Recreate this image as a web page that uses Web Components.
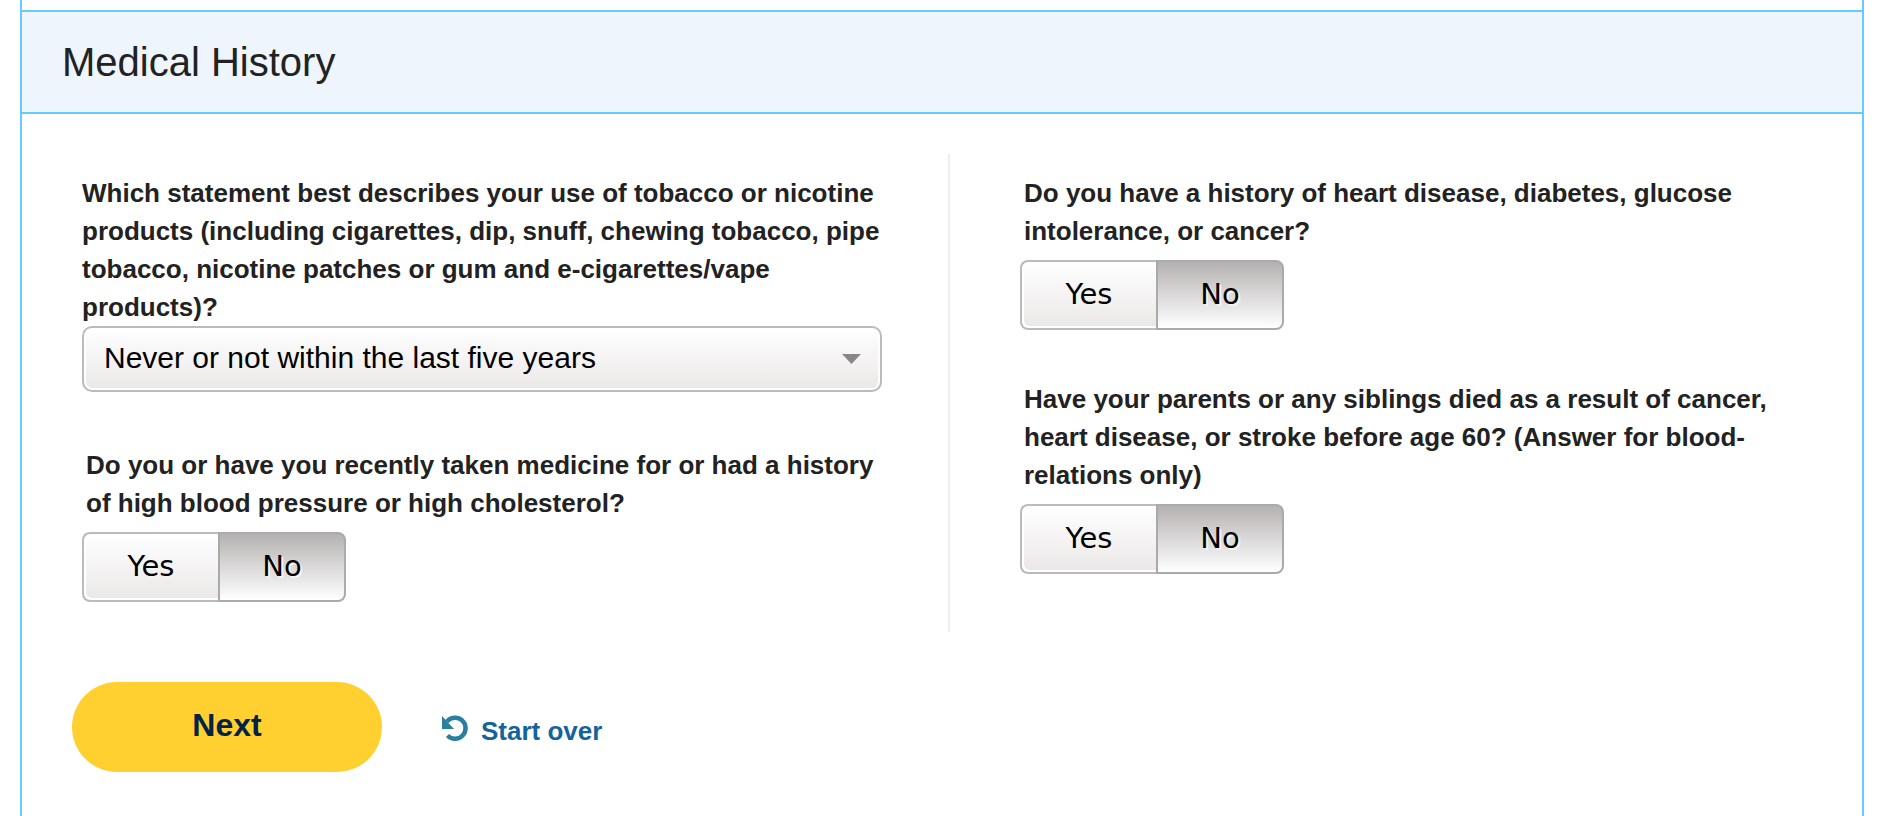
<!DOCTYPE html>
<html lang="en">
<head>
<meta charset="utf-8">
<title>Medical History</title>
<style>
  body { margin: 0; background: #fff; color: #222; font-family: "Liberation Sans", Arial, sans-serif; font-size: 26px; line-height: 38px; }
</style>
</head>
<body>
<form-panel>
  <span slot="title">Medical History</span>
  <select-question slot="left" label="Which statement best describes your use of tobacco or nicotine products (including cigarettes, dip, snuff, chewing tobacco, pipe tobacco, nicotine patches or gum and e-cigarettes/vape products)?">
  </select-question>
  <yes-no-question slot="left" name="pressure">Do you or have you recently taken medicine for or had a history of high blood pressure or high cholesterol?</yes-no-question>
  <yes-no-question slot="right" name="history">Do you have a history of heart disease, diabetes, glucose intolerance, or cancer?</yes-no-question>
  <yes-no-question slot="right" name="family">Have your parents or any siblings died as a result of cancer, heart disease, or stroke before age 60? (Answer for blood-relations only)</yes-no-question>
  <form-actions slot="actions"></form-actions>
</form-panel>

<script>
function define(name, html) {
  const template = document.createElement("template");
  template.innerHTML = html;
  customElements.define(name, class extends HTMLElement {
    constructor() {
      super();
      this.attachShadow({ mode: "open" }).append(template.content.cloneNode(true));
    }
    connectedCallback() {
      const label = this.shadowRoot.querySelector("[data-label]");
      if (label) label.textContent = this.getAttribute("label");
      for (const radio of this.shadowRoot.querySelectorAll("input[type=radio]")) radio.name = this.getAttribute("name");
    }
  });
}

define("form-panel", `
  <style>
    :host { display: block; box-sizing: border-box; min-height: 100vh; margin: 0 16px 0 20px; padding-top: 10px; border: solid #6cf; border-width: 0 2px; }
    header { padding: 26px 40px; background: #eef5fd; border: solid #6cf; border-width: 2px 0; }
    h1 { margin: 0; font-size: 40px; line-height: 48px; font-weight: 400; }
    main { display: grid; grid-template-columns: 928px 1fr; padding-top: 40px; }
    section { display: flex; flex-direction: column; gap: 50px; padding: 20px 60px 30px; }
    .left { border-right: 2px solid #eee; padding-right: 66px; }
    .right { padding-left: 70px; padding-right: 80px; }
    @media (max-width: 1400px) { main { grid-template-columns: 1fr 1fr; } }
    @media (max-width: 900px) { main { grid-template-columns: 1fr; } .left { border-right: 0; } }
  </style>
  <header><h1><slot name="title"></slot></h1></header>
  <main>
    <section class="left"><slot name="left"></slot></section>
    <section class="right"><slot name="right"></slot></section>
  </main>
  <slot name="actions"></slot>
`);

define("select-question", `
  <style>
    :host { display: block; padding-bottom: 4px; }
    label { display: block; font-weight: 700; }
    .box { position: relative; }
    select { appearance: none; display: block; box-sizing: border-box; width: 100%; height: 66px; margin: 0; padding: 0 60px 2px 20px; border: 2px solid #bbb; border-radius: 10px; background: linear-gradient(#fff, #ebe7e7); box-shadow: inset 0 0 0 2px #fff; color: #000; font: 30px/36px "Liberation Sans", Arial, sans-serif; }
    svg { position: absolute; right: 21px; top: 28px; pointer-events: none; }
  </style>
  <label for="answer" data-label></label>
  <div class="box">
    <select id="answer"><option>Never or not within the last five years</option></select>
    <svg width="19" height="10" viewBox="0 0 19 10" aria-hidden="true"><path d="M0 0H19L9.500 10Z" fill="#888"/></svg>
  </div>
`);

define("yes-no-question", `
  <style>
    :host { display: block; }
    fieldset { margin: 0; padding: 0; border: 0; min-width: 0; }
    legend { padding: 0 0 10px 4px; font-weight: 700; }
    .group { display: inline-flex; vertical-align: top; }
    label { position: relative; display: flex; box-sizing: border-box; justify-content: center; height: 70px; padding-top: 14px; border: 2px solid #bbb; background: linear-gradient(#fff, #ebe7e7); box-shadow: inset 2px -2px #fff; color: #000; font: 29px/36px "DejaVu Sans", Verdana, sans-serif; text-shadow: 2px 2px #f3f3f3; }
    .yes { width: 136px; border-right: 0; border-radius: 8px 0 0 8px; }
    .no { width: 128px; border-radius: 0 8px 8px 0; }
    input { position: absolute; inset: 0; width: 100%; height: 100%; margin: 0; opacity: 0; }
    label:has(input:checked) { border-color: #aaa; background: linear-gradient(#b5b1b1, #fff); box-shadow: none; }
    label:has(input:focus-visible) { outline: 2px solid #15639b; }
  </style>
  <fieldset>
    <legend><slot></slot></legend>
    <div class="group">
      <label class="yes"><input type="radio" value="yes">Yes</label>
      <label class="no"><input type="radio" value="no" checked>No</label>
    </div>
  </fieldset>
`);

define("form-actions", `
  <style>
    :host { display: flex; align-items: center; gap: 59px; padding: 50px 50px 44px; }
    button { width: 310px; height: 90px; padding: 0 0 4px; border: 0; border-radius: 45px; background: #ffd02f; color: #002347; font: 700 32px/40px "Liberation Sans", Arial, sans-serif; }
    a { display: flex; align-items: center; gap: 12px; padding-top: 8px; color: #15639b; font-weight: 700; text-decoration: none; }
    svg { margin-bottom: 6px; }
  </style>
  <button type="button">Next</button>
  <a href="#"><svg width="28" height="26" viewBox="0 0 28 26" aria-hidden="true"><path d="M6 6.500A10.500 10.500 0 1 1 6.500 20.500" fill="none" stroke="#2a7f9f" stroke-width="4.500"/><path d="M1 1V14H13Z" fill="#2a7f9f"/></svg>Start over</a>
`);
</script>
</body>
</html>
